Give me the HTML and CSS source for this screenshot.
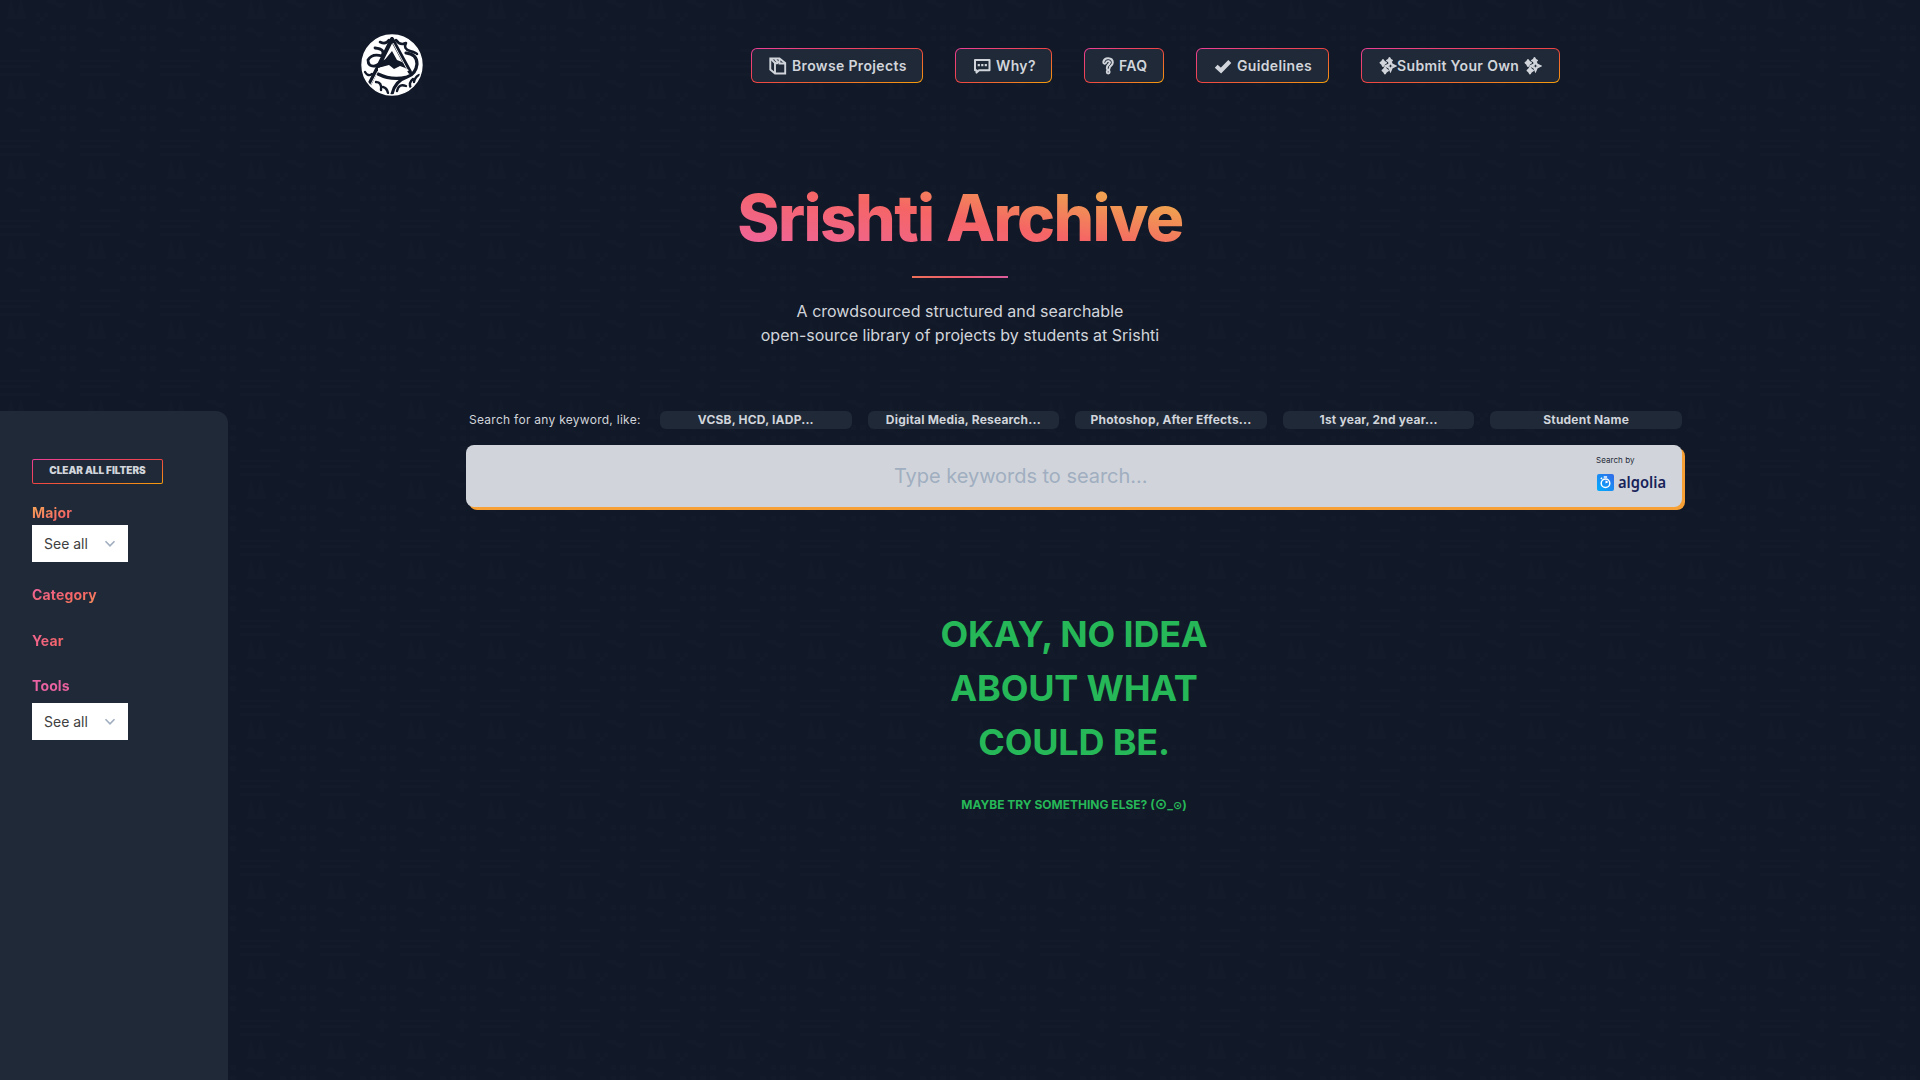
FILE: index.html
```html
<!DOCTYPE html>
<html lang="en">
<head>
<meta charset="utf-8">
<title>Srishti Archive</title>
<link rel="stylesheet" href="styles.css">
</head>
<body>
<header class="site-header">
  <a class="logo" href="#" aria-label="Srishti Archive">
    <svg viewBox="0 0 62 62" width="62" height="62">
      <circle cx="31" cy="31" r="30" fill="#fff"/>
      <g fill="none" stroke="#111827" stroke-linecap="round" stroke-linejoin="round">
        <path d="M31 5L8 51M31 5L49 38" stroke-width="4"/>
        <path d="M28 6Q25 11 19 8M35 6Q39 12 45 9Q42 15 49 17T56 20" stroke-width="2.600"/>
        <path d="M14 14Q25 15 21 22Q11 19 7 26Q7 33 14 32L24 27" stroke-width="2.800"/>
        <path d="M45 19Q56 20 56 30Q55 40 46 43Q31 47 17 40M46 43Q34 47 31 60" stroke-width="3.200"/>
        <path d="M4 38Q7 43 11 40M15 48Q21 48 20 56M27 59Q26 54 22 53M36 57Q38 49 45 52M50 54Q47 49 52 45M58 41Q54 43 53 48" stroke-width="2.400"/>
      </g>
      <path d="M31 17L36 26L41 28L47 35L39 32L33 35L28 31L17 34Z" fill="#111827"/>
      <path d="M32 9L47 37M17 37L9 52" stroke="#fff" stroke-width=".9"/>
      <path d="M17 34L28 32L33 36L39 33L48 36Q34 47 17 37Z" fill="#fff"/>
      <circle cx="31" cy="31" r="30" fill="none" stroke="#fff" stroke-width="1.4"/>
    </svg>
  </a>
  <nav class="nav">
    <a class="nav-btn browse" href="#">
      <svg class="icon" viewBox="0 0 18 18"><path d="M1.300 1.500h9.200l5.700 4.500v10.500H6l-4.700-4z" fill="none" stroke="currentColor" stroke-width="1.900"/><path d="M2 2l4 4v10.500M6 2l3.500 4M10.500 2v4.500h5.500M6 6.500l3-.5" fill="none" stroke="currentColor" stroke-width="1.900"/></svg>
      <span>Browse Projects</span>
    </a>
    <a class="nav-btn why" href="#">
      <svg class="icon" viewBox="0 0 18 18"><path d="M2 3h14.500v10.200H6L3.500 15.600v-2.400H2z" fill="none" stroke="currentColor" stroke-width="2" stroke-linejoin="round"/><path d="M4.700 7h2.200v2.200H4.700zM8.200 7h2.200v2.200H8.200zM11.700 7h2.200v2.200h-2.200z" fill="currentColor"/></svg>
      <span>Why?</span>
    </a>
    <a class="nav-btn faq" href="#">
      <svg class="icon narrow" viewBox="0 0 12 18"><g fill="none" stroke-linecap="round"><path d="M2.7 5.3Q3 2.600 6.2 2.600Q9.5 2.700 9.4 5.5Q9.3 7.2 7.4 8.5Q6.2 9.4 6.2 11.3M6.2 14.8v.3" stroke="currentColor" stroke-width="4.800"/><path d="M2.7 5.3Q3 2.600 6.2 2.600Q9.5 2.700 9.4 5.5Q9.3 7.2 7.4 8.5Q6.2 9.4 6.2 11.3M6.2 14.8v.2" stroke="#1f2937" stroke-width="1"/></g></svg>
      <span>FAQ</span>
    </a>
    <a class="nav-btn guidelines" href="#">
      <svg class="icon" viewBox="0 0 18 18"><path d="M2.200 9.200L7 13.500L15.800 4.500" fill="none" stroke="currentColor" stroke-width="4.200"/></svg>
      <span>Guidelines</span>
    </a>
    <a class="nav-btn submit" href="#">
      <svg class="icon" viewBox="0 0 18 18"><path d="M11.500 4.500L12.900 7.600L16 9L12.900 10.400L11.500 13.500L10.100 10.400L7 9L10.100 7.600Z" fill="none" stroke="currentColor" stroke-width="2.200"/><path d="M4 3L5.200 4.700L7 5.800L5.200 7L4 9L3 7L1.500 5.800L3 4.700ZM6 10.500L7.200 12.400L9 13.500L7.200 14.600L6 16.500L4.800 14.600L3.500 13.500L4.800 12.400ZM10.500 1l.8 1.700 1.700.8-1.700.8-.8 1.700-.8-1.700-1.700-.8 1.700-.8z" fill="currentColor" stroke="currentColor" stroke-width="1.900" stroke-linejoin="round"/></svg>
      <span>Submit Your Own</span>
      <svg class="icon last" viewBox="0 0 18 18"><path d="M11.500 4.500L12.900 7.600L16 9L12.900 10.400L11.500 13.500L10.100 10.400L7 9L10.100 7.600Z" fill="none" stroke="currentColor" stroke-width="2.200"/><path d="M4 3L5.200 4.700L7 5.800L5.200 7L4 9L3 7L1.500 5.800L3 4.700ZM6 10.500L7.200 12.400L9 13.500L7.200 14.600L6 16.500L4.800 14.600L3.500 13.500L4.800 12.400ZM10.500 1l.8 1.700 1.700.8-1.700.8-.8 1.700-.8-1.700-1.700-.8 1.700-.8z" fill="currentColor" stroke="currentColor" stroke-width="1.900" stroke-linejoin="round"/></svg>
    </a>
  </nav>
</header>

<section class="hero">
  <h1 class="title">Srishti Archive</h1>
  <div class="rule"></div>
  <p class="tagline">A crowdsourced structured and searchable<br>open-source library of projects by students at Srishti</p>
</section>

<div class="layout">
  <aside class="filters">
    <button class="clear">CLEAR ALL FILTERS</button>
    <h2 class="filter-name major">Major</h2>
    <div class="select"><span>See all</span><svg viewBox="0 0 12 8" width="12" height="8"><path d="M1.500 1.300L6 5.800L10.500 1.300" fill="none" stroke="#a0aec0" stroke-width="1.600"/></svg></div>
    <h2 class="filter-name category">Category</h2>
    <h2 class="filter-name year">Year</h2>
    <h2 class="filter-name tools">Tools</h2>
    <div class="select"><span>See all</span><svg viewBox="0 0 12 8" width="12" height="8"><path d="M1.500 1.300L6 5.800L10.500 1.300" fill="none" stroke="#a0aec0" stroke-width="1.600"/></svg></div>
  </aside>
  <main class="main">
    <div class="hints">
      <span class="hint-label">Search for any keyword, like:</span>
      <span class="chip">VCSB, HCD, IADP...</span>
      <span class="chip">Digital Media, Research...</span>
      <span class="chip">Photoshop, After Effects...</span>
      <span class="chip">1st year, 2nd year...</span>
      <span class="chip">Student Name</span>
    </div>
    <div class="search">
      <span class="placeholder">Type keywords to search...</span>
      <div class="algolia">
        <span class="by">Search by</span>
        <svg width="72" height="28" viewBox="0 0 72 28">
          <defs><linearGradient id="blue" x1="0" y1="1" x2="1" y2="0"><stop offset="0" stop-color="#00aeff"/><stop offset="1" stop-color="#3369e7"/></linearGradient></defs>
          <rect x="1" y="3" width="17" height="17" rx="2" fill="url(#blue)"/>
          <circle cx="9.500" cy="12.200" r="4.300" fill="none" stroke="#fff" stroke-width="1.500"/>
          <path d="M9.500 12.500V9.500Q11.500 9.700 12.300 11.200ZM7.700 5.200h3.400v1.500H7.700zM4.300 7.500l1.300-1.300 1 1-1.300 1.300z" fill="#fff"/>
          <text class="wordmark" x="22" y="16.500" textLength="48" lengthAdjust="spacingAndGlyphs">algolia</text>
        </svg>
      </div>
    </div>
    <div class="empty">
      <p class="empty-title">OKAY, NO IDEA<br>ABOUT WHAT<br>COULD BE.</p>
      <p class="empty-sub">MAYBE TRY SOMETHING ELSE? (<span class="eye">⊙</span>_<span class="eye small">⊙</span>)</p>
    </div>
  </main>
</div>
</body>
</html>
```
FILE: styles.css
```css
* { box-sizing: border-box; margin: 0; padding: 0; }

body {
  height: 1080px;
  overflow: hidden;
  display: flex;
  flex-direction: column;
  color: #d1d5db;
  font-family: Inter, "Noto Sans", sans-serif;
  background-color: #111827;
  background-image: url("data:image/svg+xml,%3Csvg xmlns='http://www.w3.org/2000/svg' width='80' height='80'%3E%3Cg fill='%239c92ac' fill-opacity='.016'%3E%3Cpath d='M11 0L16 19H7zM21 0L26 19H16zM20 49h20v3H20zM0 60h40v2H0zM0 65h31v3H0zM0 73h40v3H0zM60 60h4v4h4v4h-4v4h-4v-4h-4v-4h4zM51 25h5v5h-5zM60 25h6v5h-6zM70 25h6v5h-6zM40 36h6v5h-6zM51 36h5v5h-5zM60 36h6v5h-6zM70 36h6v5h-6zM60 46h6v5h-6zM70 46h6v5h-6zM36 13h4v4h4v-4h4v4h-4v4h-4v4h-4v-4h4v-4h-4zM5 31Q11 24 16 32H24Q20 42 15 33zM46 2Q52 -5 57 3H66Q61 12 56 5z'/%3E%3C/g%3E%3C/svg%3E");
}

.site-header {
  width: 1200px;
  height: 130px;
  margin: 0 auto;
  display: flex;
  justify-content: space-between;
  align-items: center;
}
.logo { display: block; height: 62px; width: 62px; margin-left: 1px; }
.nav { display: flex; gap: 32px; }
.nav-btn {
  height: 35px;
  padding: 1px 15px 0 17px;
  display: flex;
  align-items: center;
  border: 1px solid transparent;
  border-radius: 6px;
  background: linear-gradient(#1f2937, #1f2937) padding-box, linear-gradient(to bottom right, #ed3f97, #ef4444, #f59e0b) border-box;
  color: #d1d5db;
  font-size: 14px;
  font-weight: 600;
  letter-spacing: .35px;
  white-space: nowrap;
  text-decoration: none;
}
.browse { width: 172px; }
.why { width: 97px; }
.faq { width: 80px; }
.guidelines { width: 133px; }
.submit { width: 199px; }
.icon { width: 18px; height: 18px; margin-right: 5px; flex: none; }
.icon.narrow { width: 12px; }
.submit .icon { margin-right: 0; }
.submit .icon.last { margin-left: 5px; }

.hero {
  height: 281px;
  display: flex;
  flex-direction: column;
  align-items: center;
  padding-top: 48px;
}
.title {
  font-size: 64px;
  font-weight: 800;
  line-height: 80px;
  letter-spacing: -1.6px;
  white-space: nowrap;
  color: transparent;
  background: linear-gradient(to top right, #ed64a6, #f56565 50%, #f0a050 80%);
  -webkit-background-clip: text;
  background-clip: text;
}
.rule { width: 96px; height: 2px; margin-top: 18px; background: linear-gradient(to right, #ee7058, #ec5c70, #dc5c9c); }
.tagline { margin-top: 21px; font-size: 16px; line-height: 24px; text-align: center; }

.layout { flex: 1; display: flex; align-items: stretch; }
.filters {
  width: 228px;
  padding: 48px 32px;
  background: #1f2937;
  border-radius: 0 12px 0 0;
  display: flex;
  flex-direction: column;
  align-items: flex-start;
}
.clear {
  width: 131px;
  height: 25px;
  padding-bottom: 3px;
  border: 1px solid transparent;
  border-radius: 2px;
  background: linear-gradient(#1f2937, #1f2937) padding-box, linear-gradient(to bottom right, #ed3f97, #ef4444, #f59e0b) border-box;
  color: #d1d5db;
  font: 900 10px/20px Inter, sans-serif;
  letter-spacing: -.03px;
  white-space: nowrap;
}
.filter-name {
  font-size: 14px;
  font-weight: 700;
  line-height: 20px;
  letter-spacing: .15px;
  color: transparent;
  background: linear-gradient(to right, #ed64a6, #f56565);
  -webkit-background-clip: text;
  background-clip: text;
}
.major { margin: 19px 0 2px; background-image: linear-gradient(to bottom right, #f6ad55, #f56565 75%); }
.category { margin-top: 23px; background-image: linear-gradient(to bottom right, #ed64a6, #f56565 60%, #f6955a); }
.year { margin-top: 26px; background-image: linear-gradient(to right, #f0648c, #f56565); }
.tools { margin: 25px 0 7px; background-image: linear-gradient(to right, #ed64a6, #e8609c); }
.select {
  width: 96px;
  height: 37px;
  padding: 0 12px;
  display: flex;
  align-items: center;
  justify-content: space-between;
  background: #fff;
  color: #404040;
  font-size: 14px;
}

.main { width: 1219px; margin-left: 238px; }
.hints { height: 18px; width: 1216px; padding-left: 2px; display: flex; align-items: center; gap: 16px; font-size: 12px; line-height: 18px; }
.hint-label { width: 176px; padding-left: 1px; letter-spacing: .27px; white-space: nowrap; }
.chip { flex: 1 1 0; background: #1f2937; border-radius: 6px; text-align: center; font-weight: 700; letter-spacing: .2px; white-space: nowrap; }
.search {
  width: 1216px;
  height: 62px;
  margin-top: 16px;
  padding: 0 14px 0 428px;
  display: flex;
  justify-content: space-between;
  background: #d1d5db;
  border-radius: 8px;
  box-shadow: 3px 3px 0 #f6a035;
}
.placeholder { font-size: 20px; line-height: 62px; letter-spacing: -.04px; color: #a0aec0; white-space: nowrap; }
.algolia { width: 72px; display: flex; flex-direction: column; padding-top: 9px; color: #1f2937; }
.by { font-size: 8px; line-height: 12px; letter-spacing: .05px; }
.algolia svg { margin-top: 5px; overflow: visible; }
.wordmark { font: 600 16px "Noto Sans", sans-serif; fill: #182359; }

.empty { width: 1216px; margin-top: 100px; text-align: center; color: #26b758; }
.empty-title { font-size: 36px; font-weight: 700; line-height: 54px; letter-spacing: -.2px; }
.empty-sub { margin-top: 27px; font-size: 12px; font-weight: 700; line-height: 18px; }
.eye { font: 700 15px/1 "DejaVu Sans", sans-serif; }
.eye.small { font-size: 11px; }
```
